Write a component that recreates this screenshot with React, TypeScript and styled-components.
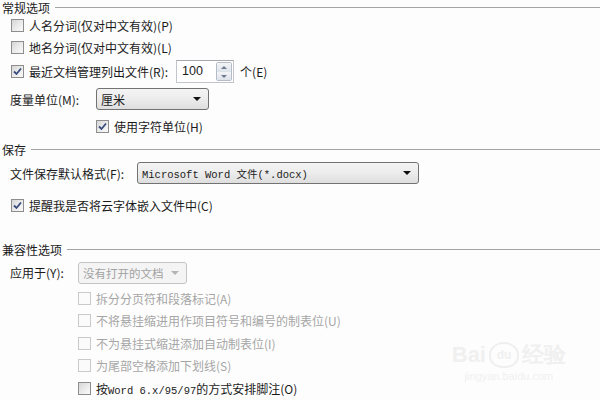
import styled, { createGlobalStyle } from "styled-components"

const Global = createGlobalStyle`
    html, body {
        margin: 0;
        padding: 0;
        background: #fdfdfd;
    }
    body {
        font-family: "Noto Sans CJK SC", "Liberation Sans", sans-serif;
        font-size: 12px;
        color: #1b1b1b;
    }
`

const Page = styled.div`
    position: relative;
    width: 600px;
    height: 400px;
    overflow: hidden;
    display: flex;
    flex-direction: column;
`

const Header = styled.div<{ $mt: number }>`
    display: flex;
    align-items: center;
    gap: 5px;
    height: 15px;
    margin-top: ${p => p.$mt}px;
    padding-left: 2px;
    line-height: 15px;

    &::after {
        content: "";
        flex: 1;
        height: 1px;
        background: #a3a3a3;
    }
`

const Row = styled.div<{ $mt: number; $h?: number; $indent?: number }>`
    display: flex;
    align-items: center;
    height: ${p => p.$h ?? 22}px;
    margin-top: ${p => p.$mt}px;
    padding-left: ${p => p.$indent ?? 10}px;
    white-space: nowrap;
`

const Label = styled.span<{ $w?: number; $disabled?: boolean }>`
    width: ${p => (p.$w ? `${p.$w}px` : "auto")};
    flex-shrink: 0;
    color: ${p => (p.$disabled ? "#a6a6a6" : "inherit")};
`

const Box = styled.span<{ $disabled?: boolean }>`
    position: relative;
    width: 13px;
    height: 13px;
    box-sizing: border-box;
    margin-left: 1px;
    margin-right: 5px;
    flex-shrink: 0;
    border: 1px solid ${p => (p.$disabled ? "#cacaca" : "#8d8d8d")};
    background: ${p =>
        p.$disabled
            ? "#fbfbfb"
            : "linear-gradient(135deg, #d6d6d6 0%, #ececec 55%, #fafafa 100%)"};

    svg {
        position: absolute;
        left: 1px;
        top: 1px;
    }
`

const Mono = styled.span`
    font-family: "Liberation Mono", "Noto Sans CJK SC", monospace;
    font-size: 10.5px;
`

const Select = styled.div<{ $w: number; $disabled?: boolean }>`
    display: flex;
    align-items: center;
    justify-content: space-between;
    box-sizing: border-box;
    width: ${p => p.$w}px;
    height: 22px;
    padding: 0 7px 0 4px;
    border: 1px solid ${p => (p.$disabled ? "#c4c4c4" : "#727272")};
    border-radius: 3px;
    background: ${p =>
        p.$disabled
            ? "#f4f4f4"
            : "linear-gradient(#f4f4f4 0%, #ececec 50%, #dedede 100%)"};
    color: ${p => (p.$disabled ? "#a2a2a2" : "inherit")};
    font-size: ${p => (p.$disabled ? "11.5px" : "12px")};

    &::after {
        content: "";
        border-left: 4px solid transparent;
        border-right: 4px solid transparent;
        border-top: 4px solid ${p => (p.$disabled ? "#b4b4b4" : "#111")};
    }
`

const Spinner = styled.div`
    display: flex;
    box-sizing: border-box;
    width: 58px;
    height: 23px;
    margin-left: 8px;
    margin-right: 6px;
    padding: 1px;
    border: 1px solid #c2c5cc;
    border-top-color: #a6a8ae;
    background: #fff;
`

const SpinValue = styled.span`
    flex: 1;
    padding-left: 4px;
    line-height: 19px;
    font-family: "Liberation Sans", sans-serif;
    font-size: 12.5px;
`

const SpinButtons = styled.div`
    display: flex;
    flex-direction: column;
    width: 14px;
    border: 1px solid #b7bdc7;
    border-radius: 2px;
`

const SpinBtn = styled.span<{ $down?: boolean }>`
    flex: 1;
    display: flex;
    align-items: center;
    justify-content: center;
    background: linear-gradient(#f2f4f8, #dde2ea);

    &::after {
        content: "";
        border-left: 3px solid transparent;
        border-right: 3px solid transparent;
        ${p => (p.$down ? "border-top: 3px solid #6f7a8c;" : "border-bottom: 3px solid #6f7a8c;")}
    }
`

const Watermark = styled.div`
    position: absolute;
    right: 34px;
    bottom: 18px;
    display: flex;
    flex-direction: column;
    align-items: center;
    color: #f0f0f0;
    font-family: "Liberation Sans", sans-serif;
    pointer-events: none;
`

const Brand = styled.div`
    display: flex;
    align-items: center;
    gap: 3px;
    font-size: 22px;
    font-weight: bold;
`

const Paw = styled.span`
    display: inline-flex;
    align-items: center;
    justify-content: center;
    width: 26px;
    height: 22px;
    border-radius: 50% 50% 45% 45%;
    border: 2px solid #efefef;
    font-size: 12px;
`

const Site = styled.span`
    font-size: 11px;
`

function Check({ checked, disabled }: { checked?: boolean; disabled?: boolean }) {
    return (
        <Box $disabled={disabled}>
            {checked && (
                <svg width="9" height="9" viewBox="0 0 9 9">
                    <path d="M1 4.5 L3.5 7 L8 1.5" fill="none" stroke="#3a4b7e" strokeWidth="1.8" />
                </svg>
            )}
        </Box>
    )
}

export default function App() {
    return (
        <Page>
            <Global />

            <Header $mt={0}>常规选项</Header>
            <Row $mt={0}>
                <Check />
                <Label>人名分词(仅对中文有效)(P)</Label>
            </Row>
            <Row $mt={0}>
                <Check />
                <Label>地名分词(仅对中文有效)(L)</Label>
            </Row>
            <Row $mt={2} $h={23}>
                <Check checked />
                <Label>最近文档管理列出文件(R):</Label>
                <Spinner>
                    <SpinValue>100</SpinValue>
                    <SpinButtons>
                        <SpinBtn />
                        <SpinBtn $down />
                    </SpinButtons>
                </Spinner>
                <Label>个(E)</Label>
            </Row>
            <Row $mt={5}>
                <Label $w={86}>度量单位(M):</Label>
                <Select $w={113}>厘米</Select>
            </Row>
            <Row $mt={5} $indent={95}>
                <Check checked />
                <Label>使用字符单位(H)</Label>
            </Row>

            <Header $mt={5}>保存</Header>
            <Row $mt={5}>
                <Label $w={127}>文件保存默认格式(F):</Label>
                <Select $w={282}>
                    <Mono>Microsoft Word 文件(*.docx)</Mono>
                </Select>
            </Row>
            <Row $mt={11}>
                <Check checked />
                <Label>提醒我是否将云字体嵌入文件中(C)</Label>
            </Row>

            <Header $mt={25}>兼容性选项</Header>
            <Row $mt={5}>
                <Label $w={68}>应用于(Y):</Label>
                <Select $w={109} $disabled>没有打开的文档</Select>
            </Row>
            <Row $mt={3} $h={23} $indent={77}>
                <Check disabled />
                <Label $disabled>拆分分页符和段落标记(A)</Label>
            </Row>
            <Row $mt={0} $h={23} $indent={77}>
                <Check disabled />
                <Label $disabled>不将悬挂缩进用作项目符号和编号的制表位(U)</Label>
            </Row>
            <Row $mt={0} $h={23} $indent={77}>
                <Check disabled />
                <Label $disabled>不为悬挂式缩进添加自动制表位(I)</Label>
            </Row>
            <Row $mt={0} $h={23} $indent={77}>
                <Check disabled />
                <Label $disabled>为尾部空格添加下划线(S)</Label>
            </Row>
            <Row $mt={0} $h={23} $indent={77}>
                <Check />
                <Label>
                    按<Mono>Word 6.x/95/97</Mono>的方式安排脚注(O)
                </Label>
            </Row>

            <Watermark>
                <Brand>
                    Bai<Paw>du</Paw>经验
                </Brand>
                <Site>jingyan.baidu.com</Site>
            </Watermark>
        </Page>
    )
}
